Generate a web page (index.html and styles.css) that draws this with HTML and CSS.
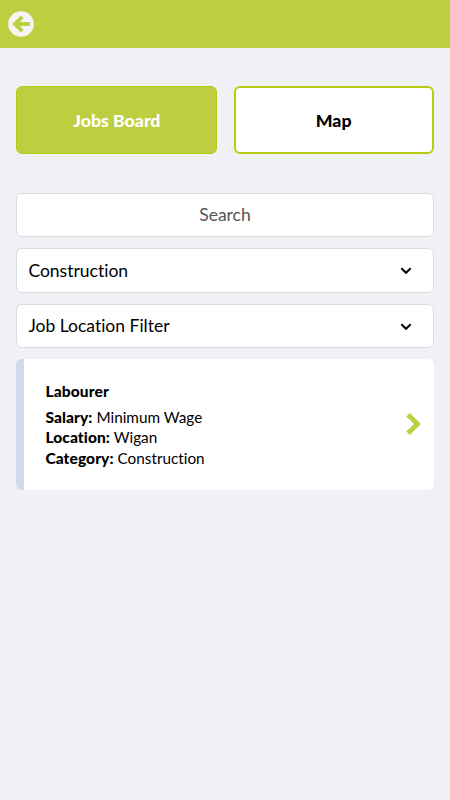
FILE: index.html
```html
<!DOCTYPE html>
<html lang="en">
<head>
  <meta charset="UTF-8">
  <meta name="viewport" content="width=device-width, initial-scale=1">
  <title>Jobs Board</title>
  <link rel="stylesheet" href="styles.css">
</head>
<body>
  <header class="header">
    <a href="#" class="back" aria-label="Back">
      <svg width="26" height="26" viewBox="0 0 26 26">
        <circle cx="13" cy="13" r="12.8" fill="#f5f5f5"/>
        <path d="M14.2 5.9 L7 13 L14.2 20.1 M7 13 H21.7" fill="none" stroke="#bdcf41" stroke-width="3.9"/>
      </svg>
    </a>
  </header>

  <main class="content">
    <div class="tabs">
      <button class="tab active">Jobs Board</button>
      <button class="tab">Map</button>
    </div>

    <form class="filters">
      <input type="text" class="field search" placeholder="Search">

      <div class="select">
        <select class="field">
          <option>Construction</option>
        </select>
        <svg class="arrow" width="12" height="8" viewBox="0 0 12 8">
          <path d="M1.3 1.3 L6 5.8 L10.7 1.3" fill="none" stroke="#000" stroke-width="2"/>
        </svg>
      </div>

      <div class="select">
        <select class="field">
          <option>Job Location Filter</option>
        </select>
        <svg class="arrow" width="12" height="8" viewBox="0 0 12 8">
          <path d="M1.3 1.3 L6 5.8 L10.7 1.3" fill="none" stroke="#000" stroke-width="2"/>
        </svg>
      </div>
    </form>

    <a href="#" class="job">
      <div class="job-info">
        <h3>Labourer</h3>
        <p><strong>Salary:</strong> Minimum Wage</p>
        <p><strong>Location:</strong> Wigan</p>
        <p><strong>Category:</strong> Construction</p>
      </div>
      <svg width="15" height="22" viewBox="0 0 15 22">
        <path d="M2 1.7 L11.5 11 L2 20.3" fill="none" stroke="#bdcf41" stroke-width="4.8"/>
      </svg>
    </a>
  </main>
</body>
</html>
```
FILE: styles.css
```css
* {
  box-sizing: border-box;
}

body {
  margin: 0;
  min-height: 100vh;
  background-color: #f0f1f7;
  font-family: Lato, sans-serif;
  font-variant-ligatures: none;
  color: #000;
}

.header {
  display: flex;
  align-items: center;
  height: 48px;
  padding-left: 8px;
  background-color: #bdcf41;
}

.back {
  display: flex;
}

.content {
  padding: 38px 16.4px 0;
}

.tabs {
  display: grid;
  grid-template-columns: 201px 200px;
  justify-content: space-between;
}

.tab {
  height: 68px;
  border: 2px solid #b6cc10;
  border-radius: 6px;
  background: #fff;
  color: #000;
  font-family: inherit;
  font-size: 17.7px;
  font-weight: 900;
}

.tab.active {
  background: #bdcf41;
  border-width: 1px;
  color: #fff;
}

.filters {
  display: flex;
  flex-direction: column;
  gap: 11px;
  margin-top: 38.5px;
}

.field {
  display: block;
  width: 100%;
  height: 44.5px;
  padding: 0 11px;
  border: 1px solid #dadcde;
  border-radius: 6px;
  background: #fff;
  color: #000;
  font-family: inherit;
  font-size: 17.5px;
  font-variant-ligatures: none;
  appearance: none;
}

.search {
  text-align: center;
}

.search::placeholder {
  color: #555;
}

.select {
  position: relative;
}

.arrow {
  position: absolute;
  top: 19px;
  right: 21.5px;
  pointer-events: none;
}

.job {
  display: flex;
  align-items: center;
  justify-content: space-between;
  height: 131px;
  margin-top: 10.8px;
  padding: 0 13px 0 21px;
  border-left: 8px solid #d3d9eb;
  border-radius: 6px;
  background: #fff;
  color: #000;
  text-decoration: none;
}

.job-info {
  padding-top: 1px;
}

.job h3 {
  margin: 0 0 5px;
  font-size: 15.5px;
  font-weight: 900;
  letter-spacing: 0.15px;
  line-height: 21px;
}

.job p {
  margin: 0;
  font-size: 15.3px;
  line-height: 20.7px;
}

.job strong {
  font-size: 15.5px;
  font-weight: 900;
  letter-spacing: 0.1px;
}
```
